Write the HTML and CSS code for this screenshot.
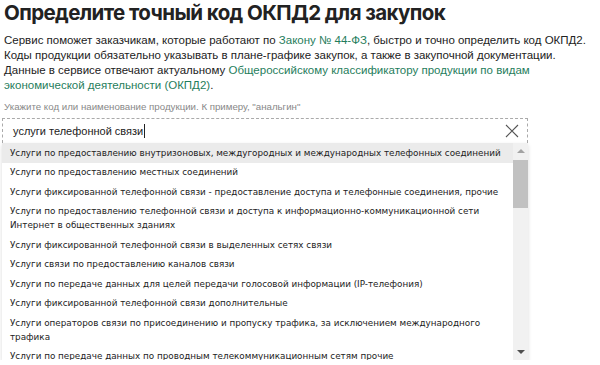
FILE: index.html
```html
<!DOCTYPE html>
<html lang="ru">
<head>
    <meta charset="UTF-8">
    <meta name="viewport" content="width=device-width, initial-scale=1.0">
    <title>Определите точный код ОКПД2 для закупок</title>
    <link rel="stylesheet" href="styles.css">
</head>
<body>
    <h1 class="title">Определите точный код ОКПД2 для закупок</h1>
    <p class="intro">
        Сервис поможет заказчикам, которые работают по <a href="#">Закону № 44-ФЗ</a>, быстро и точно определить код ОКПД2.<br>
        Коды продукции обязательно указывать в плане-графике закупок, а также в закупочной документации.<br>
        Данные в сервисе отвечают актуальному <a href="#">Общероссийскому классификатору продукции по видам<br>экономической деятельности (ОКПД2)</a>.
    </p>

    <!-- поиск кода -->
    <div class="search">
        <div class="search-label">Укажите код или наименование продукции. К примеру, "анальгин"</div>
        <div class="search-field">
            <span class="search-value">услуги телефонной связи</span><span class="caret"></span>
            <span class="clear-btn">
                <svg width="14" height="14" viewBox="0 0 14 14"><path d="M1 1L13 13M13 1L1 13" stroke="#555" stroke-width="1.1" fill="none"/></svg>
            </span>
        </div>
        <div class="suggest">
            <ul class="suggest-list">
                <li class="active">Услуги по предоставлению внутризоновых, междугородных и международных телефонных соединений</li>
                <li>Услуги по предоставлению местных соединений</li>
                <li>Услуги фиксированной телефонной связи - предоставление доступа и телефонные соединения, прочие</li>
                <li>Услуги по предоставлению телефонной связи и доступа к информационно-коммуникационной сети<br>Интернет в общественных зданиях</li>
                <li>Услуги фиксированной телефонной связи в выделенных сетях связи</li>
                <li>Услуги связи по предоставлению каналов связи</li>
                <li>Услуги по передаче данных для целей передачи голосовой информации (IP-телефония)</li>
                <li>Услуги фиксированной телефонной связи дополнительные</li>
                <li>Услуги операторов связи по присоединению и пропуску трафика, за исключением международного<br>трафика</li>
                <li>Услуги по передаче данных по проводным телекоммуникационным сетям прочие</li>
            </ul>
            <div class="scrollbar">
                <span class="arrow-up"></span>
                <span class="thumb"></span>
                <span class="arrow-down"></span>
            </div>
        </div>
    </div>
</body>
</html>
```

FILE: styles.css
```css
/* базовые стили */
body {
    margin: 0;
    padding: 0 4px;
    font-family: "Liberation Sans", Arial, sans-serif;
    color: #222;
    background: #fff;
}

a {
    color: #1f7d5c;
    text-decoration: none;
}

.title {
    margin: 0;
    font-family: Inter, "Liberation Sans", sans-serif;
    font-size: 20.5px;
    font-weight: 700;
    line-height: 26px;
    letter-spacing: -0.6px;
}

.intro {
    margin: 7px 0 0;
    font-size: 11.5px;
    line-height: 15px;
    white-space: nowrap;
}

/* поиск */
.search {
    margin: 8px 0 0 -2px;
    width: 526px;
}

.search-label {
    padding-left: 2px;
    font-size: 9.7px;
    line-height: 12px;
    color: #888;
}

.search-field {
    display: flex;
    align-items: center;
    height: 24px;
    margin-top: 5px;
    padding: 0 8px 0 10px;
    border: 1px dashed #aaa;
    border-bottom: none;
    font-size: 11px;
}

.search-value {
    color: #222;
}

.caret {
    display: inline-block;
    width: 1px;
    height: 14px;
    margin-left: 1px;
    background: #222;
}

.clear-btn {
    display: flex;
    margin-left: auto;
}

/* выпадающий список */
.suggest {
    display: flex;
    height: 217px;
    background: #fff;
    box-shadow: 0 2px 4px rgba(0, 0, 0, 0.15);
    overflow: hidden;
}

.suggest-list {
    flex: 1;
    margin: 0;
    padding: 0;
    list-style: none;
    font-family: "DejaVu Sans", sans-serif;
    font-size: 8.8px;
    line-height: 14px;
}

.suggest-list li {
    padding: 2.75px 8px;
    white-space: nowrap;
}

.suggest-list li.active {
    background: #ebebeb;
}

.scrollbar {
    display: flex;
    flex-direction: column;
    align-items: center;
    width: 15px;
    background: #f1f1f1;
}

.arrow-up,
.arrow-down {
    width: 0;
    height: 0;
    border-left: 4px solid transparent;
    border-right: 4px solid transparent;
}

.arrow-up {
    margin-top: 6px;
    border-bottom: 4px solid #a3a3a3;
}

.arrow-down {
    margin: auto 0 6px;
    border-top: 4px solid #505050;
}

.thumb {
    width: 15px;
    height: 48px;
    margin-top: 7px;
    background: #c1c1c1;
}
```
